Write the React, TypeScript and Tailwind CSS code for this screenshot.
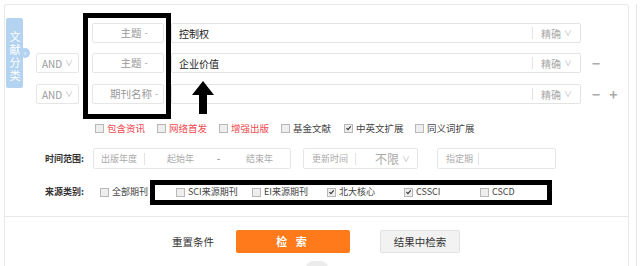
import type { ReactNode } from 'react';

const font = { fontFamily: '"Noto Sans CJK SC", "Liberation Sans", sans-serif' };

function Box({ checked = false }: { checked?: boolean }) {
  return (
    <span className="relative inline-flex h-[9px] w-[9px] shrink-0 items-center justify-center border border-[#b8b8b8] bg-[#eeeeee]">
      {checked ? (
        <svg viewBox="0 0 10 10" className="h-[8px] w-[8px]">
          <path d="M2 5.2 L4.2 7.4 L8.2 2.6" fill="none" stroke="#333" strokeWidth="1.6" />
        </svg>
      ) : null}
    </span>
  );
}

function Check({ label, checked, red, className }: { label: string; checked?: boolean; red?: boolean; className?: string }) {
  return (
    <span className={`flex items-center gap-[3px] whitespace-nowrap ${className ?? ''}`}>
      <Box checked={checked} />
      <span className={red ? 'text-[#f0494f]' : 'text-[#444]'}>{label}</span>
    </span>
  );
}

function Caret() {
  return <span className="ml-[3px] text-[8px] text-[#bbb]">∨</span>;
}

function SearchRow({ and, field, value, minus, plus, className }: { and?: boolean; field: string; value: string; minus?: boolean; plus?: boolean; className?: string }) {
  return (
    <div className={`flex h-[20px] items-stretch ${className ?? ''}`}>
      {and ? (
        <div className="flex w-[43px] items-center justify-center rounded-[2px] border border-[#e6e6e6] text-[10px] text-[#999]">
          AND<Caret />
        </div>
      ) : (
        <div className="w-[43px]" />
      )}
      <div className="ml-[13px] flex w-[72px] items-center justify-center whitespace-nowrap rounded-[2px] border border-[#e6e6e6] pl-[12px] text-[10.5px] text-[#999]">
        {field}
        <span className="ml-[3px] text-[9px]">-</span>
      </div>
      <div className="ml-[7px] flex w-[410px] rounded-[2px] border border-[#e3e3e3]">
        <div className="flex flex-1 items-center pl-[7px] text-[10px] text-[#222]">{value}</div>
        <div className="my-[3px] w-px bg-[#e3e3e3]" />
        <div className="flex w-[47px] items-center justify-center text-[10px] text-[#aaa]">
          精确<Caret />
        </div>
      </div>
      <div className="ml-[11px] flex items-center gap-[9px] text-[14px] font-bold text-[#aaa]">
        {minus ? <span>−</span> : null}
        {plus ? <span>+</span> : null}
      </div>
    </div>
  );
}

function Field({ children, className }: { children: ReactNode; className?: string }) {
  return <div className={`flex h-[21px] items-center whitespace-nowrap rounded-[2px] border border-[#e6e6e6] text-[9px] text-[#aaa] ${className ?? ''}`}>{children}</div>;
}

export default function App() {
  return (
    <div className="relative h-[266px] w-[640px] overflow-hidden bg-white" style={font}>
      <div className="flex h-full">
        <div className="ml-[4px] mt-[4px] flex w-[625px] flex-col rounded-t-[3px] border border-b-0 border-[#e8e8e8]">
          <div className="flex flex-col pl-[31px] pt-[18px]">
            <SearchRow field="主题" value="控制权" />
            <SearchRow and field="主题" value="企业价值" minus className="mt-[10px]" />
            <SearchRow and field="期刊名称" value="" minus plus className="mt-[11px]" />
          </div>

          <div className="mt-[17px] flex h-[14px] items-center pl-[90px] text-[9.5px]">
            <Check label="包含资讯" red className="w-[62px]" />
            <Check label="网络首发" red className="w-[62px]" />
            <Check label="增强出版" red className="w-[62px]" />
            <Check label="基金文献" className="w-[63px]" />
            <Check label="中英文扩展" checked className="w-[71px]" />
            <Check label="同义词扩展" />
          </div>

          <div className="mt-[13px] flex items-center pl-[40px]">
            <span className="w-[48px] whitespace-nowrap text-[9px] font-bold text-[#333]">时间范围:</span>
            <Field className="w-[198px]">
              <span className="w-[50px] pl-[7px]">出版年度</span>
              <span className="h-[12px] w-px bg-[#e3e3e3]" />
              <span className="ml-[22px] w-[50px]">起始年</span>
              <span className="w-[29px] text-[#666]">-</span>
              <span>结束年</span>
            </Field>
            <Field className="ml-[12px] w-[115px]">
              <span className="w-[51px] pl-[8px]">更新时间</span>
              <span className="h-[12px] w-px bg-[#e3e3e3]" />
              <span className="ml-[19px] text-[12px] text-[#aaa]">不限</span>
              <Caret />
            </Field>
            <Field className="ml-[19px] w-[119px]">
              <span className="w-[40px] pl-[8px]">指定期</span>
              <span className="h-[12px] w-px bg-[#e3e3e3]" />
            </Field>
          </div>

          <div className="mt-[13px] flex h-[20px] items-center pl-[40px] text-[9px]">
            <span className="w-[55px] whitespace-nowrap font-bold text-[#333]">来源类别:</span>
            <Check label="全部期刊" className="w-[76px]" />
            <Check label="SCI来源期刊" className="w-[76px]" />
            <Check label="EI来源期刊" className="w-[75px]" />
            <Check label="北大核心" checked className="w-[77px]" />
            <Check label="CSSCI" checked className="w-[76px]" />
            <Check label="CSCD" />
          </div>

          <div className="mt-[14px] border-t border-[#e8e8e8]" />

          <div className="mt-[13px] flex items-center pl-[167px]">
            <span className="whitespace-nowrap text-[10.5px] text-[#333]">重置条件</span>
            <button className="ml-[22px] flex h-[23px] w-[114px] items-center justify-center rounded-[2px] bg-[#ff7a1a] text-[11px] font-bold tracking-[3px] text-white">
              检 索
            </button>
            <button className="ml-[30px] flex h-[23px] w-[80px] items-center justify-center whitespace-nowrap rounded-[2px] border border-[#e2e2e2] bg-[#f2f2f2] text-[10.5px] text-[#333]">
              结果中检索
            </button>
          </div>
        </div>
        <div className="ml-[7px] mt-[4px] h-full border-l border-[#e6e6e6]" />
      </div>

      {/* side tab */}
      <div className="absolute left-[6px] top-[18px] flex h-[70px] w-[17px] justify-center rounded-[2px] bg-[#b3d3f0] pt-[8px] text-[11px] leading-[17px] tracking-[2px] text-white [writing-mode:vertical-rl]">
        文献分类
      </div>
      <div className="absolute left-[20px] top-[48px] flex h-[10px] w-[10px] items-center justify-center rounded-full bg-[#b3d3f0] text-[8px] leading-none text-white">
        ›
      </div>

      {/* bottom handle */}
      <div className="absolute left-[306px] top-[261px] h-[14px] w-[22px] rounded-full bg-[#ececec]" />

      {/* annotations */}
      <div className="absolute left-[83px] top-[13px] h-[106px] w-[88px] border-[5px] border-black" />
      <div className="absolute left-[150px] top-[180px] h-[25px] w-[402px] border-[5px] border-black" />
      <svg className="absolute left-[192px] top-[81px]" width="22" height="33" viewBox="0 0 22 33">
        <path d="M11 0 L22 14 L15 14 L15 33 L7 33 L7 14 L0 14 Z" fill="#000" />
      </svg>
    </div>
  );
}
